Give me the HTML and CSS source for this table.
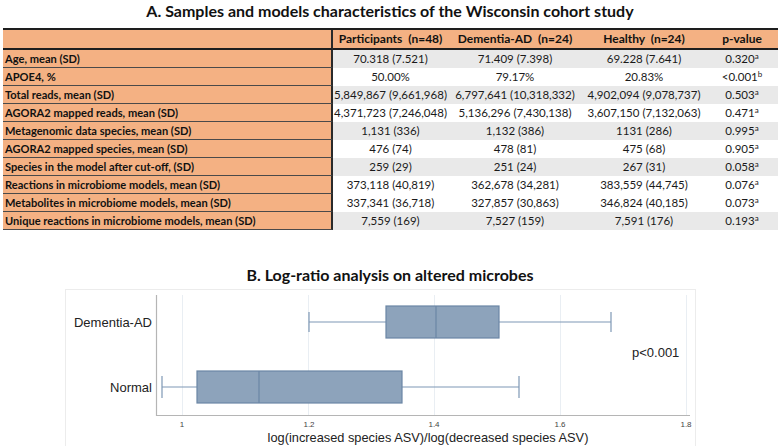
FILE: index.html
```html
<!DOCTYPE html>
<html>
<head>
<meta charset="utf-8">
<link rel="stylesheet" href="styles.css">
</head>
<body>
<div class="page">
  <h1 class="title-a">A. Samples and models characteristics of the Wisconsin cohort study</h1>
  <table class="stats">
    <colgroup>
      <col class="c-label"><col class="c-part"><col class="c-dem"><col class="c-hea"><col class="c-p">
    </colgroup>
    <thead>
      <tr>
        <th class="lab"></th>
        <th>Participants&nbsp; (n=48)</th>
        <th>Dementia-AD&nbsp; (n=24)</th>
        <th>Healthy&nbsp; (n=24)</th>
        <th>p-value</th>
      </tr>
    </thead>
    <tbody>
      <tr class="g"><td class="lab">Age, mean (SD)</td><td>70.318 (7.521)</td><td>71.409 (7.398)</td><td>69.228 (7.641)</td><td>0.320<sup>a</sup></td></tr>
      <tr><td class="lab">APOE4, %</td><td>50.00%</td><td>79.17%</td><td>20.83%</td><td>&lt;0.001<sup>b</sup></td></tr>
      <tr class="g"><td class="lab">Total reads, mean (SD)</td><td>5,849,867 (9,661,968)</td><td>6,797,641 (10,318,332)</td><td>4,902,094 (9,078,737)</td><td>0.503<sup>a</sup></td></tr>
      <tr><td class="lab">AGORA2 mapped reads, mean (SD)</td><td>4,371,723 (7,246,048)</td><td>5,136,296 (7,430,138)</td><td>3,607,150 (7,132,063)</td><td>0.471<sup>a</sup></td></tr>
      <tr class="g"><td class="lab">Metagenomic data species, mean (SD)</td><td>1,131 (336)</td><td>1,132 (386)</td><td>1131 (286)</td><td>0.995<sup>a</sup></td></tr>
      <tr><td class="lab">AGORA2 mapped species, mean (SD)</td><td>476 (74)</td><td>478 (81)</td><td>475 (68)</td><td>0.905<sup>a</sup></td></tr>
      <tr class="g"><td class="lab">Species in the model after cut-off, (SD)</td><td>259 (29)</td><td>251 (24)</td><td>267 (31)</td><td>0.058<sup>a</sup></td></tr>
      <tr><td class="lab">Reactions in microbiome models, mean (SD)</td><td>373,118 (40,819)</td><td>362,678 (34,281)</td><td>383,559 (44,745)</td><td>0.076<sup>a</sup></td></tr>
      <tr><td class="lab">Metabolites in microbiome models, mean (SD)</td><td>337,341 (36,718)</td><td>327,857 (30,863)</td><td>346,824 (40,185)</td><td>0.073<sup>a</sup></td></tr>
      <tr class="g"><td class="lab">Unique reactions in microbiome models, mean (SD)</td><td>7,559 (169)</td><td>7,527 (159)</td><td>7,591 (176)</td><td>0.193<sup>a</sup></td></tr>
    </tbody>
  </table>

  <h2 class="title-b">B. Log-ratio analysis on altered microbes</h2>
  <div class="chart">
    <svg class="plot" width="780" height="160" viewBox="0 0 780 160" xmlns="http://www.w3.org/2000/svg">
      <rect x="65.5" y="3.5" width="630" height="170" fill="none" stroke="#ececec" stroke-width="1"/>
      <g stroke="#e9eef3" stroke-width="1">
        <line x1="182.5" y1="9" x2="182.5" y2="129"/>
        <line x1="308.5" y1="9" x2="308.5" y2="129"/>
        <line x1="434.5" y1="9" x2="434.5" y2="129"/>
        <line x1="560.5" y1="9" x2="560.5" y2="129"/>
        <line x1="686.5" y1="9" x2="686.5" y2="129"/>
      </g>
      <line x1="156.5" y1="9" x2="156.5" y2="130" stroke="#b5b5b5" stroke-width="1.2"/>
      <line x1="156" y1="129.5" x2="690" y2="129.5" stroke="#b5b5b5" stroke-width="1.2"/>

      <g stroke="#7e98b5" stroke-width="1.2" fill="none">
        <line x1="309" y1="36" x2="386" y2="36"/>
        <line x1="309" y1="26" x2="309" y2="46"/>
        <line x1="499" y1="36" x2="611" y2="36"/>
        <line x1="611" y1="26" x2="611" y2="46"/>
        <line x1="162" y1="101" x2="197" y2="101"/>
        <line x1="162" y1="90" x2="162" y2="112"/>
        <line x1="402" y1="101" x2="519" y2="101"/>
        <line x1="519" y1="90" x2="519" y2="112"/>
      </g>
      <g fill="#8da3bb" stroke="#6b86a5" stroke-width="1.2">
        <rect x="386" y="20" width="113" height="32"/>
        <rect x="197" y="85" width="205" height="32"/>
      </g>
      <g stroke="#6b86a5" stroke-width="1.2">
        <line x1="436" y1="20" x2="436" y2="52"/>
        <line x1="259" y1="85" x2="259" y2="117"/>
      </g>

      <g class="tick" text-anchor="middle">
        <text x="182" y="141">1</text>
        <text x="309" y="141">1.2</text>
        <text x="434" y="141">1.4</text>
        <text x="560" y="141">1.6</text>
        <text x="686" y="141">1.8</text>
      </g>
      <text class="cat" x="152" y="41" text-anchor="end">Dementia-AD</text>
      <text class="cat" x="152" y="106" text-anchor="end">Normal</text>
      <text class="cat" x="632" y="71">p&lt;0.001</text>
      <text class="axis-title" x="428" y="156" text-anchor="middle">log(increased species ASV)/log(decreased species ASV)</text>
    </svg>
  </div>
</div>
</body>
</html>
```

FILE: styles.css
```css
html, body {
  margin: 0;
  padding: 0;
  background: #ffffff;
}
.page {
  width: 780px;
  height: 446px;
  overflow: hidden;
  font-family: "Lato", "Open Sans", sans-serif;
  color: #111;
}
.title-a {
  margin: 0;
  height: 28px;
  line-height: 22px;
  font-size: 16px;
  font-weight: 700;
  text-align: center;
  color: #111;
}
.stats {
  margin-left: 3px;
  width: 775px;
  table-layout: fixed;
  border-collapse: separate;
  border-spacing: 0;
  border-top: 2px solid #1e1e1e;
  font-size: 11.5px;
}
.c-label { width: 330px; }
.c-part { width: 115px; }
.c-dem { width: 134px; }
.c-hea { width: 124px; }
.c-p { width: 72px; }
.stats th {
  background: #f4b183;
  font-weight: 700;
  font-size: 12px;
  height: 18px;
  line-height: 18px;
  padding: 0;
  text-align: center;
  white-space: nowrap;
  border-bottom: 2px solid #1e1e1e;
}
.stats td {
  padding: 0;
  height: 18px;
  line-height: 18px;
  text-align: center;
  white-space: nowrap;
  background: #ffffff;
  color: #1a1a1a;
}
.stats tr.g td {
  background: #e9e9e9;
}
.stats th.lab,
.stats td.lab,
.stats tr.g td.lab {
  background: #f4b183;
  border-right: 2px solid #2a2a2a;
}
.stats td.lab {
  text-align: left;
  font-weight: 700;
  font-size: 11.1px;
  color: #111;
  padding-left: 2px;
  height: 17px;
  line-height: 17px;
  border-bottom: 1px solid #4a4a4a;
}
.stats sup {
  font-size: 8px;
  line-height: 0;
  vertical-align: 4px;
}
.title-b {
  margin: 34px 0 0 0;
  height: 22px;
  line-height: 22px;
  font-size: 16px;
  font-weight: 700;
  text-align: center;
  color: #111;
}
.chart {
  height: 160px;
}
.plot {
  display: block;
}
.tick {
  font-family: "Liberation Sans", Arial, sans-serif;
  font-size: 8px;
  fill: #444;
}
.cat {
  font-family: "Liberation Sans", Arial, sans-serif;
  font-size: 13px;
  fill: #222;
}
.axis-title {
  font-family: "Liberation Sans", Arial, sans-serif;
  font-size: 12.8px;
  fill: #222;
}
```
